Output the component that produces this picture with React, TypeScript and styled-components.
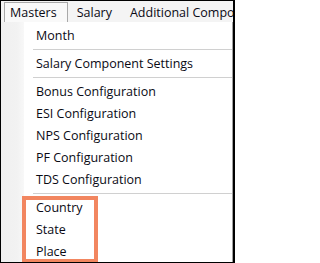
import React from "react";
import styled, { createGlobalStyle } from "styled-components";

const Global = createGlobalStyle`
  html, body { margin: 0; padding: 0; background: #ffffff; }
  body { font-family: "Open Sans", "Noto Sans", "Liberation Sans", sans-serif; }
`;

const Frame = styled.div`
  position: relative;
  width: 235px;
  height: 263px;
  box-sizing: border-box;
  border: 1px solid #000;
  border-right-width: 2px;
  display: flex;
  flex-direction: column;
  overflow: hidden;
  background: #f0f0f0;
`;

const MenuBar = styled.div`
  height: 21px;
  display: flex;
  align-items: stretch;
  padding-left: 3px;
  background: #f4f4f4;
  white-space: nowrap;
  overflow: hidden;
`;

const MenuTab = styled.div<{ $open?: boolean }>`
  display: flex;
  align-items: center;
  box-sizing: border-box;
  margin-top: 1px;
  padding: 0 ${(p) => (p.$open ? "10px" : "8px")} 1px ${(p) => (p.$open ? "5px" : "8px")};
  font-size: 12.5px;
  color: #0a0a14;
  border: 1px solid ${(p) => (p.$open ? "#a9a9a9" : "transparent")};
  border-bottom: none;
  background: ${(p) => (p.$open ? "#f9f9f9" : "transparent")};
`;

const Body = styled.div`
  flex: 1;
  display: flex;
`;

const Gutter = styled.div`
  width: 23px;
  background: linear-gradient(to right, #f0f0f0 0%, #f2f2f2 70%, #f8f8f8 100%);
`;

const Dropdown = styled.div`
  flex: 1;
  background: #ffffff;
  border-right: 1px solid #a0a0a0;
  padding-top: 2px;
  display: flex;
  flex-direction: column;
`;

const Item = styled.div`
  height: 22px;
  display: flex;
  align-items: center;
  padding-left: 12px;
  font-size: 12.5px;
  color: #0a0a14;
  white-space: nowrap;
`;

const Separator = styled.div`
  height: 6px;
  display: flex;
  align-items: center;
  margin-left: 9px;
  &::after {
    content: "";
    flex: 1;
    height: 1px;
    background: #d0d0d0;
  }
`;

const Highlight = styled.div`
  position: absolute;
  left: 21px;
  top: 195px;
  width: 76px;
  height: 67px;
  box-sizing: border-box;
  border: 4px solid #f28660;
  pointer-events: none;
`;

const groups: string[][] = [
  ["Month"],
  ["Salary Component Settings"],
  ["Bonus Configuration", "ESI Configuration", "NPS Configuration", "PF Configuration", "TDS Configuration"],
  ["Country", "State", "Place"],
];

export default function App() {
  return (
    <>
      <Global />
      <Frame>
        <MenuBar>
          <MenuTab $open>Masters</MenuTab>
          <MenuTab>Salary</MenuTab>
          <MenuTab>Additional Components</MenuTab>
        </MenuBar>
        <Body>
          <Gutter />
          <Dropdown>
            {groups.map((g, gi) => (
              <React.Fragment key={gi}>
                {gi > 0 && <Separator />}
                {g.map((label) => (
                  <Item key={label}>{label}</Item>
                ))}
              </React.Fragment>
            ))}
          </Dropdown>
        </Body>
        <Highlight />
      </Frame>
    </>
  );
}
